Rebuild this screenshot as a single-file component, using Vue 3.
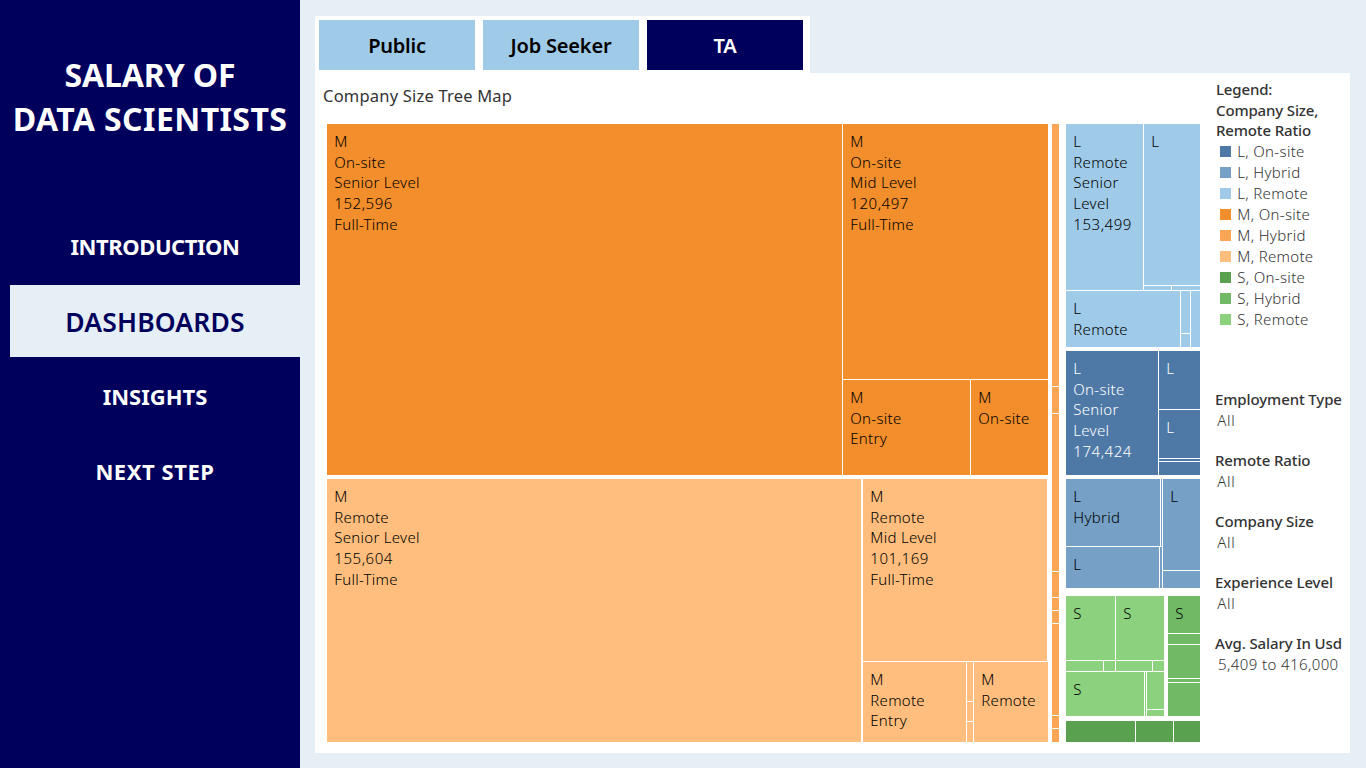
<script setup>
import { h } from 'vue'

const colors = {
  lo: '#4e79a7', lh: '#76a0c6', lr: '#a0cbe8',
  mo: '#f28e2b', mh: '#fba655', mr: '#ffbe7d',
  so: '#59a14f', sh: '#72b966', sr: '#8cd17d',
}

// Treemap tree: rows and columns hold [size, child] pairs, leaves are cells.
const row = (...kids) => ({ dir: 'row', gap: 1, kids })
const col = (...kids) => ({ dir: 'column', gap: 1, kids })
const gap = (g, node) => ({ ...node, gap: g })
const cell = (tone, ...lines) => ({ tone, lines })

const onsiteM = row(
  [515, cell('mo', 'M', 'On-site', 'Senior Level', '152,596', 'Full-Time')],
  [205, col(
    [255, cell('mo', 'M', 'On-site', 'Mid Level', '120,497', 'Full-Time')],
    [95, row([127, cell('mo', 'M', 'On-site', 'Entry')], [77, cell('mo', 'M', 'On-site')])],
  )],
)
const remoteM = gap(2, row(
  [534, cell('mr', 'M', 'Remote', 'Senior Level', '155,604', 'Full-Time')],
  [185, col(
    [182, row([184, cell('mr', 'M', 'Remote', 'Mid Level', '101,169', 'Full-Time')])],
    [80, row(
      [103, cell('mr', 'M', 'Remote', 'Entry')],
      [6, col([39, cell('mr')], [19, cell('mr')], [20, cell('mr')])],
      [74, cell('mr', 'M', 'Remote')],
    )],
  )],
))
const hybridM = col(...[262, 26, 157, 25, 12, 12, 91, 12, 13].map((s) => [s, cell('mh')]))
const remoteL = col(
  [166, row(
    [77, cell('lr', 'L', 'Remote', 'Senior', 'Level', '153,499')],
    [56, col([161, cell('lr', 'L')], [4, row([27, cell('lr')], [28, cell('lr')])])],
  )],
  [56, row(
    [114, cell('lr', 'L', 'Remote')],
    [9, col([42, cell('lr')], [13, cell('lr')])],
    [9, cell('lr')],
  )],
)
const onsiteL = row(
  [92, cell('lo', 'L', 'On-site', 'Senior', 'Level', '174,424')],
  [41, col([58, cell('lo', 'L')], [48, cell('lo', 'L')], [2, cell('lo')], [13, cell('lo')])],
)
const hybridL = row(
  [96, col(
    [67, row([94, cell('lh', 'L', 'Hybrid')], [1, cell('lh')])],
    [41, row([93, cell('lh', 'L')], [2, cell('lh')])],
  )],
  [37, col([91, cell('lh', 'L')], [17, cell('lh')])],
)
const remoteS = col(
  [64, row([49, cell('sr', 'S')], [48, cell('sr', 'S')])],
  [10, row([37, cell('sr')], [11, cell('sr')], [36, cell('sr')], [11, cell('sr')])],
  [44, row(
    [78, cell('sr', 'S')],
    [1, cell('sr')],
    [17, col([37, cell('sr')], [6, cell('sr')])],
  )],
)
const hybridS = col(
  [37, cell('sh', 'S')], [10, cell('sh')], [33, cell('sh')], [3, cell('sh')], [33, cell('sh')],
)
const onsiteS = row([69, cell('so')], [37, cell('so')], [26, cell('so')])

const tree = gap(4, row(
  [721, gap(4, col([351, onsiteM], [263, remoteM]))],
  [10, row([7, hybridM])],
  [134, gap(4, col(
    [223, remoteL],
    [124, onsiteL],
    [113, col([109, hybridL])],
    [121, col([120, gap(4, row([98, remoteS], [32, hybridS]))])],
    [21, onsiteS],
  ))],
))

const TreeNode = ({ node, size }) => {
  const flex = size === undefined ? undefined : `0 0 ${size}px`
  if (node.kids) {
    return h('div', { class: 'branch', style: { flex, flexDirection: node.dir, gap: `${node.gap}px` } },
      node.kids.map(([s, kid]) => h(TreeNode, { node: kid, size: s })))
  }
  return h('div', { class: ['cell', { pale: node.tone === 'lo' }], style: { flex, background: colors[node.tone] } },
    node.lines.map((t) => h('div', { class: ['line', { num: /\d/.test(t) }] }, t)))
}
TreeNode.props = ['node', 'size']

const legend = [
  ['lo', 'L, On-site'], ['lh', 'L, Hybrid'], ['lr', 'L, Remote'],
  ['mo', 'M, On-site'], ['mh', 'M, Hybrid'], ['mr', 'M, Remote'],
  ['so', 'S, On-site'], ['sh', 'S, Hybrid'], ['sr', 'S, Remote'],
]
const filters = [
  ['Employment Type', 'All'], ['Remote Ratio', 'All'], ['Company Size', 'All'],
  ['Experience Level', 'All'], ['Avg. Salary In Usd', '5,409 to 416,000'],
]
</script>

<template>
  <div class="page">
    <aside class="side">
      <h1>SALARY OF<br><span class="second">DATA SCIENTISTS</span></h1>
      <nav>
        <a class="intro">INTRODUCTION</a>
        <a class="active">DASHBOARDS</a>
        <a class="insights">INSIGHTS</a>
        <a class="next">NEXT STEP</a>
      </nav>
    </aside>
    <main>
      <div class="tabs">
        <button>Public</button>
        <button>Job Seeker</button>
        <button class="on">TA</button>
      </div>
      <section class="panel">
        <div class="chart">
          <h2>Company Size Tree Map</h2>
          <div class="treemap"><TreeNode :node="tree" /></div>
        </div>
        <div class="info">
          <div class="legend-title">Legend:<br>Company Size,<br>Remote Ratio</div>
          <ul>
            <li v-for="[tone, name] in legend" :key="name">
              <i :style="{ background: colors[tone] }"></i><span>{{ name }}</span>
            </li>
          </ul>
          <dl>
            <div v-for="[name, value] in filters" :key="name">
              <dt>{{ name }}</dt>
              <dd :class="{ range: value !== 'All' }">{{ value }}</dd>
            </div>
          </dl>
        </div>
      </section>
    </main>
  </div>
</template>

<style>
body { margin: 0; overflow: hidden; }
</style>

<style scoped>
.page { display: flex; width: 1366px; height: 768px; background: #e6eff5; font-family: "Noto Sans", "Open Sans", sans-serif; color: #333; }
.side { width: 300px; flex: none; background: #00005c; color: #fff; text-align: center; }
h1 { margin: 53px 0 0; font-size: 32px; line-height: 44px; font-weight: 700; height: 157px; white-space: nowrap; letter-spacing: -0.1px; }
.second { letter-spacing: 0.4px; }
nav { display: flex; flex-direction: column; }
nav a { display: flex; align-items: center; justify-content: center; box-sizing: border-box; height: 75px; margin-left: 10px; padding-bottom: 3px; font-size: 22px; font-weight: 700; letter-spacing: -0.45px; }
nav .insights { letter-spacing: 0; }
nav .next { letter-spacing: 0.55px; }
nav .active { height: 72px; margin-bottom: 3px; padding: 1px 0 0; background: #e6eff5; color: #00005c; font-size: 26.5px; font-weight: 600; letter-spacing: 0.15px; }
main { padding: 16px 0 0 15px; }
.tabs { display: flex; gap: 8px; box-sizing: border-box; width: 495px; height: 57px; padding: 4px 4px 3px; background: #fff; }
button { width: 156px; height: 50px; border: 0; padding: 0; background: #a0cbe8; color: #000; font: 600 20px "Noto Sans", sans-serif; letter-spacing: -0.2px; }
button.on { background: #00005c; color: #fff; }
.panel { display: flex; width: 1035px; height: 680px; background: #fff; }
.chart { width: 873px; padding-left: 12px; flex: none; }
h2 { margin: 11px 0 0 -4px; height: 40px; font-size: 16.5px; line-height: 24px; font-weight: 400; letter-spacing: 0.2px; }
.treemap { display: flex; width: 873px; height: 618px; }
.treemap :deep(.branch) { display: flex; box-sizing: border-box; min-width: 0; min-height: 0; }
.treemap :deep(.cell) { box-sizing: border-box; min-width: 0; min-height: 0; overflow: hidden; color: #000; }
.treemap :deep(.line) { margin-left: 7.3px; font-size: 15px; font-weight: 300; line-height: 20.7px; white-space: nowrap; letter-spacing: 0.28px; }
.treemap :deep(.num) { letter-spacing: 0.55px; }
.treemap :deep(.line:first-child) { margin-top: 7px; }
.treemap :deep(.pale) { color: #fff; }
.info { padding: 6px 0 0 15px; font-size: 15px; white-space: nowrap; }
.legend-title { padding-left: 1px; line-height: 20.6px; font-weight: 500; letter-spacing: -0.15px; }
ul { list-style: none; margin: 0; padding: 0 0 0 5px; }
li { display: flex; align-items: center; height: 21px; font-weight: 300; letter-spacing: 0.32px; }
li i { width: 11px; height: 11px; margin-right: 6.3px; }
dl { margin: 59px 0 0; }
dl div { height: 61px; }
dt { line-height: 21px; font-weight: 500; letter-spacing: -0.11px; }
dd { margin: 0 0 0 2.3px; line-height: 21px; font-weight: 300; letter-spacing: 0.7px; }
dd.range { margin-left: 3px; letter-spacing: 0.4px; }
</style>
